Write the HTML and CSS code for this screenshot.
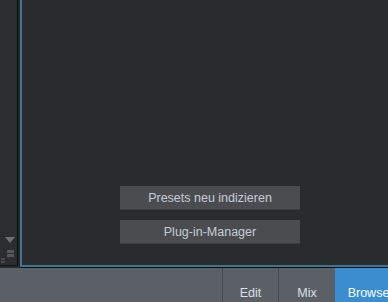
FILE: index.html
```html
<!DOCTYPE html>
<html lang="de">
<head>
    <meta charset="UTF-8">
    <title>Browser</title>
    <link rel="stylesheet" href="styles.css">
</head>
<body>
    <div class="workspace">
        <div class="side-panel">
            <div class="side-tools">
                <div class="arrow-down"></div>
                <div class="grip">
                    <span></span>
                    <span></span>
                </div>
                <div class="grip-small">
                    <span></span>
                    <span></span>
                </div>
            </div>
        </div>
        <div class="side-gap"></div>
        <div class="browser-area">
            <div class="browser-actions">
                <button class="action-btn">Presets neu indizieren</button>
                <button class="action-btn">Plug-in-Manager</button>
            </div>
        </div>
    </div>
    <div class="tab-bar">
        <div class="tab-fill"></div>
        <div class="tab">Edit</div>
        <div class="tab mix">Mix</div>
        <div class="tab active">Browse</div>
    </div>
</body>
</html>
```

FILE: styles.css
```css
body, html {
    margin: 0;
    padding: 0;
    width: 100%;
    height: 100%;
    overflow: hidden;
    font-family: 'Liberation Sans', Arial, sans-serif;
    background-color: #2a2b2d;
}
body {
    display: flex;
    flex-direction: column;
}
.workspace {
    display: flex;
    height: 268px;
    flex: 0 0 268px;
}
.side-panel {
    width: 17px;
    height: 265px;
    background-color: #2c2d2f;
    border-right: 1px solid #0c0c0d;
    border-bottom: 1px solid #111213;
    display: flex;
    flex-direction: column;
    justify-content: flex-end;
}
.side-gap {
    width: 2px;
    height: 266px;
    background-color: #26272a;
}
.browser-area {
    flex: 1;
    height: 265px;
    background-color: #2a2b2d;
    border-left: 2px solid #3f7593;
    border-bottom: 2px solid #3f7593;
    box-shadow: 0 1px 0 #0e0f10;
    display: flex;
    flex-direction: column;
    justify-content: flex-end;
}
.side-tools {
    position: relative;
    height: 28px;
}
.arrow-down {
    position: absolute;
    left: 5px;
    top: 0;
    width: 0;
    height: 0;
    border-left: 5px solid transparent;
    border-right: 5px solid transparent;
    border-top: 6px solid #6d7076;
}
.grip {
    position: absolute;
    left: 7px;
    top: 13px;
    display: flex;
    flex-direction: column;
    gap: 1px;
}
.grip span {
    display: block;
    width: 7px;
    height: 3px;
    background-color: #55585d;
}
.grip-small {
    position: absolute;
    left: 1px;
    top: 21px;
    display: flex;
    flex-direction: column;
    gap: 1px;
}
.grip-small span {
    display: block;
    width: 4px;
    height: 2px;
    background-color: #44474b;
}
.browser-actions {
    display: flex;
    flex-direction: column;
    gap: 10px;
    padding: 0 0 21px 98px;
}
.action-btn {
    width: 180px;
    height: 24px;
    padding: 0;
    border: none;
    border-bottom: 1px solid #3c3d40;
    background-color: #4b4c50;
    color: #c3ccd8;
    font-family: 'Liberation Sans', Arial, sans-serif;
    font-size: 12.5px;
    cursor: pointer;
}
.tab-bar {
    flex: 1;
    display: flex;
    background-color: #5b5f66;
    overflow: hidden;
}
.tab-fill {
    width: 222px;
    flex: 0 0 222px;
}
.tab {
    flex: 0 0 56px;
    border-left: 1px solid #474a50;
    color: #dbe0e8;
    font-size: 12.5px;
    display: flex;
    align-items: flex-end;
    justify-content: center;
    padding-bottom: 2px;
    box-sizing: border-box;
}
.tab.mix {
    flex: 0 0 57px;
}
.tab.active {
    flex: 0 0 67px;
    border-left: none;
    background-color: #3a8ecf;
    color: #ffffff;
}
```
